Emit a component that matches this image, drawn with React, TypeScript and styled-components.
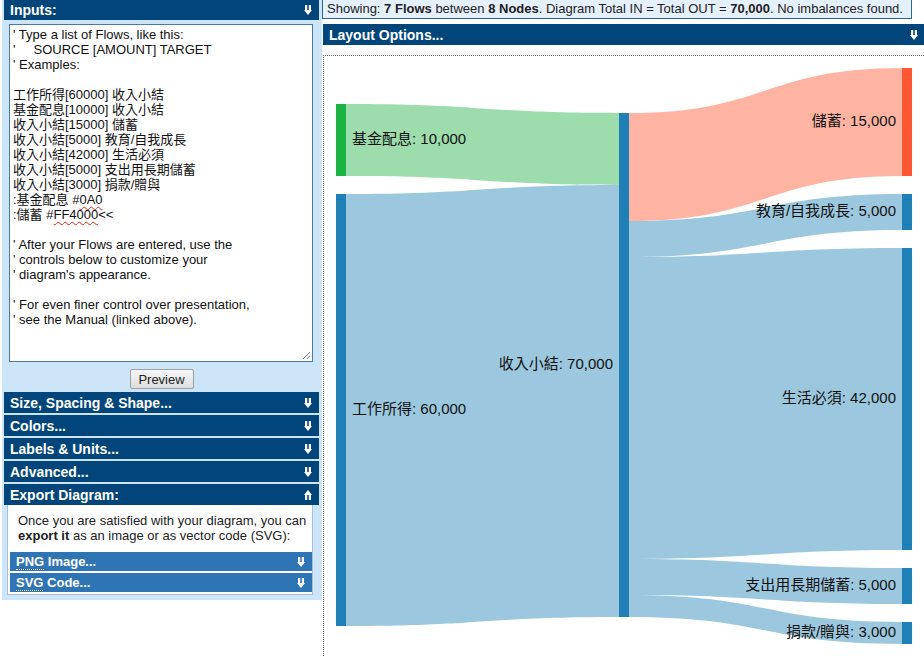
import React from "react";
import styled, { createGlobalStyle } from "styled-components";

const GlobalStyle = createGlobalStyle`
  html, body {
    margin: 0;
    padding: 0;
    background: #ffffff;
    font-family: "Liberation Sans", Arial, "Noto Sans CJK TC", sans-serif;
    color: #111;
  }
`;

const NAVY = "#02457a";
const PANEL = "#cde5f8";

const Page = styled.div`
  display: flex;
  align-items: flex-start;
  width: 924px;
  height: 656px;
  overflow: hidden;
`;

const LeftPanel = styled.div`
  margin-left: 2px;
  width: 315px;
  padding: 0 3px 5px 2px;
  background: ${PANEL};
  display: flex;
  flex-direction: column;
`;

const Bar = styled.div<{ $sub?: boolean; $first?: boolean }>`
  display: flex;
  align-items: center;
  justify-content: space-between;
  height: ${(p) => (p.$sub ? "19px" : p.$first ? "20px" : "21px")};
  padding: 0 6px;
  background: ${(p) => (p.$sub ? "#2f74b5" : NAVY)};
  color: #fff;
  font-weight: bold;
  font-size: ${(p) => (p.$sub ? "13px" : "14px")};
  margin-top: ${(p) => (p.$first ? "0" : "2px")};
  cursor: pointer;
`;

const ArrowIcon = styled.svg`
  display: block;
  margin-right: 1px;
`;

function Arrow({ up }: { up?: boolean }) {
  return (
    <ArrowIcon width="8" height="10" viewBox="0 0 8 10">
      <path
        d="M1 0h2.2v5h1.6V0H7v5h1L4 10L0 5h1z"
        fill="#fff"
        transform={up ? "rotate(180 4 5)" : undefined}
      />
    </ArrowIcon>
  );
}

const Dotted = styled.span`
  border-bottom: 1px dotted #fff;
  line-height: 13px;
`;

const InputArea = styled.div`
  position: relative;
  margin: 4px 6px 0 5px;
  height: 332px;
  padding: 2px 3px;
  border: 1px solid #4a7aa0;
  background: #fff;
  font-size: 13px;
  color: #111;
  overflow: hidden;
`;

const Line = styled.div`
  height: 15px;
  line-height: 15px;
  white-space: pre;
`;

const Squiggle = styled.span`
  text-decoration: underline wavy #e0201a;
  text-decoration-thickness: 1px;
  text-underline-offset: 2px;
`;

const Grip = styled.svg`
  position: absolute;
  right: 1px;
  bottom: 1px;
`;

const ButtonRow = styled.div`
  display: flex;
  justify-content: center;
  margin-top: 7px;
  margin-bottom: 1px;
`;

const PreviewButton = styled.button`
  height: 20px;
  width: 64px;
  padding: 0;
  border: 1px solid #a0a0a0;
  border-radius: 2px;
  background: linear-gradient(#f6f6f6, #dedede);
  font-family: "Liberation Sans", Arial, sans-serif;
  font-size: 13px;
  color: #222;
`;

const ExportBox = styled.div`
  margin: 0 6px 0 3px;
  padding: 0 0 2px 2px;
  border: 1px solid #a9bfd2;
  border-top: none;
  background: #fff;
  display: flex;
  flex-direction: column;
`;

const ExportText = styled.p`
  margin: 8px 0 9px 8px;
  font-size: 13px;
  line-height: 15px;
  color: #222;
`;

const RightColumn = styled.div`
  flex: 1;
  display: flex;
  flex-direction: column;
  min-width: 0;
`;

const InfoBox = styled.div`
  width: 584px;
  height: 18px;
  border: 1px solid #2f6593;
  border-top: none;
  background: #e4f1fc;
  padding-left: 4px;
  font-size: 13px;
  line-height: 18px;
  color: #222;
  white-space: nowrap;
`;

const LayoutBar = styled(Bar)`
  margin: 5px 0 0 1px;
  padding-right: 5px;
`;

const DiagramBox = styled.div`
  margin: 10px 0 0 1px;
  height: 600px;
  border-top: 1px dotted #666;
  border-left: 1px dotted #666;
`;

const Diagram = styled.svg`
  display: block;
  font-family: "Liberation Sans", Arial, "Noto Sans CJK TC", sans-serif;
  font-size: 15px;
`;

const sections = ["Size, Spacing & Shape...", "Colors...", "Labels & Units...", "Advanced..."];

const BLUE = "#1f80b8";
const BLUE_FLOW = "#9cc8df";

type Flow = { x0: number; a0: number; b0: number; x1: number; a1: number; b1: number; fill: string };

const flows: Flow[] = [
  { x0: 346, a0: 104, b0: 176, x1: 619, a1: 113, b1: 185, fill: "#9cdcad" },
  { x0: 346, a0: 194, b0: 626, x1: 619, a1: 185, b1: 617, fill: BLUE_FLOW },
  { x0: 629, a0: 113, b0: 221, x1: 902, a1: 68, b1: 176, fill: "#ffb4a3" },
  { x0: 629, a0: 221, b0: 257, x1: 902, a1: 194, b1: 230, fill: BLUE_FLOW },
  { x0: 629, a0: 257, b0: 559, x1: 902, a1: 248, b1: 550, fill: BLUE_FLOW },
  { x0: 629, a0: 559, b0: 595, x1: 902, a1: 568, b1: 604, fill: BLUE_FLOW },
  { x0: 629, a0: 595, b0: 617, x1: 902, a1: 622, b1: 644, fill: BLUE_FLOW },
];

const nodes = [
  { x: 336, y: 104, h: 72, fill: "#1cb345" },
  { x: 336, y: 194, h: 432, fill: BLUE },
  { x: 619, y: 113, h: 504, fill: BLUE },
  { x: 902, y: 68, h: 108, fill: "#ff5733" },
  { x: 902, y: 194, h: 36, fill: BLUE },
  { x: 902, y: 248, h: 302, fill: BLUE },
  { x: 902, y: 568, h: 36, fill: BLUE },
  { x: 902, y: 622, h: 22, fill: BLUE },
];

const labels = [
  { x: 352, y: 140, anchor: "start", text: "基金配息: 10,000" },
  { x: 352, y: 410, anchor: "start", text: "工作所得: 60,000" },
  { x: 613, y: 365, anchor: "end", text: "收入小結: 70,000" },
  { x: 896, y: 122, anchor: "end", text: "儲蓄: 15,000" },
  { x: 896, y: 212, anchor: "end", text: "教育/自我成長: 5,000" },
  { x: 896, y: 399, anchor: "end", text: "生活必須: 42,000" },
  { x: 896, y: 586, anchor: "end", text: "支出用長期儲蓄: 5,000" },
  { x: 896, y: 633, anchor: "end", text: "捐款/贈與: 3,000" },
];

const inputLines: React.ReactNode[] = [
  "' Type a list of Flows, like this:",
  "'     SOURCE [AMOUNT] TARGET",
  "' Examples:",
  "",
  "工作所得[60000] 收入小結",
  "基金配息[10000] 收入小結",
  "收入小結[15000] 儲蓄",
  "收入小結[5000] 教育/自我成長",
  "收入小結[42000] 生活必須",
  "收入小結[5000] 支出用長期儲蓄",
  "收入小結[3000] 捐款/贈與",
  <>
    :基金配息 #<Squiggle>0A0</Squiggle>
  </>,
  <>
    :儲蓄 #<Squiggle>FF4000</Squiggle>
    {"<<"}
  </>,
  "",
  "' After your Flows are entered, use the",
  "' controls below to customize your",
  "' diagram's appearance.",
  "",
  "' For even finer control over presentation,",
  "' see the Manual (linked above).",
];

function bandPath(f: Flow) {
  const m = (f.x0 + f.x1) / 2;
  return `M${f.x0},${f.a0} C${m},${f.a0} ${m},${f.a1} ${f.x1},${f.a1} L${f.x1},${f.b1} C${m},${f.b1} ${m},${f.b0} ${f.x0},${f.b0} Z`;
}

function Sankey() {
  return (
    <Diagram width={600} height={600} viewBox="324 56 600 600">
      {flows.map((f, i) => (
        <path key={i} d={bandPath(f)} fill={f.fill} />
      ))}
      {nodes.map((n, i) => (
        <rect key={i} x={n.x} y={n.y} width={10} height={n.h} fill={n.fill} />
      ))}
      {labels.map((l, i) => (
        <text key={i} x={l.x} y={l.y} textAnchor={l.anchor as "start" | "end"} dominantBaseline="middle" fill="#111">
          {l.text}
        </text>
      ))}
    </Diagram>
  );
}

export default function App() {
  return (
    <>
      <GlobalStyle />
      <Page>
        <LeftPanel>
          <Bar $first>
            <span>Inputs:</span>
            <Arrow />
          </Bar>
          <InputArea>
            {inputLines.map((l, i) => (
              <Line key={i}>{l === "" ? "\u00a0" : l}</Line>
            ))}
            <Grip width="10" height="10" viewBox="0 0 10 10">
              <path d="M9 2 L2 9 M9 6 L6 9" stroke="#888" strokeWidth="1" />
            </Grip>
          </InputArea>
          <ButtonRow>
            <PreviewButton>Preview</PreviewButton>
          </ButtonRow>
          {sections.map((s) => (
            <Bar key={s}>
              <span>{s}</span>
              <Arrow />
            </Bar>
          ))}
          <Bar>
            <span>Export Diagram:</span>
            <Arrow up />
          </Bar>
          <ExportBox>
            <ExportText>
              Once you are satisfied with your diagram, you can
              <br />
              <b>export it</b> as an image or as vector code (SVG):
            </ExportText>
            <Bar $sub $first>
              <span>
                <Dotted>PNG</Dotted> Image...
              </span>
              <Arrow />
            </Bar>
            <Bar $sub>
              <span>
                <Dotted>SVG</Dotted> Code...
              </span>
              <Arrow />
            </Bar>
          </ExportBox>
        </LeftPanel>
        <RightColumn>
          <InfoBox>
            Showing: <b>7 Flows</b> between <b>8 Nodes</b>. Diagram Total IN = Total OUT = <b>70,000</b>. No
            imbalances found.
          </InfoBox>
          <LayoutBar>
            <span>Layout Options...</span>
            <Arrow />
          </LayoutBar>
          <DiagramBox>
            <Sankey />
          </DiagramBox>
        </RightColumn>
      </Page>
    </>
  );
}
